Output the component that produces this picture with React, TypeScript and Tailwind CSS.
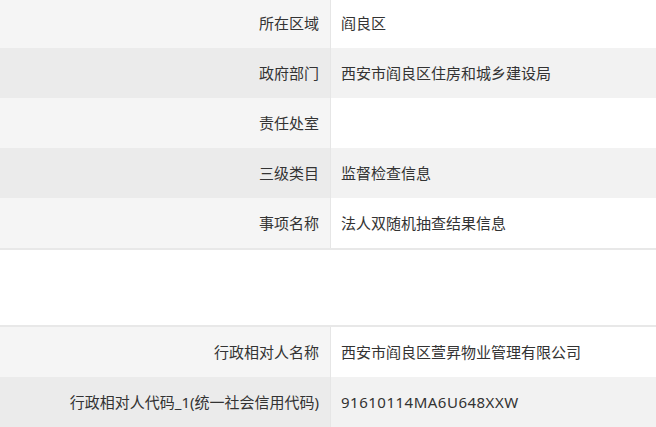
const infoRows = [
  { label: '所在区域', value: '阎良区' },
  { label: '政府部门', value: '西安市阎良区住房和城乡建设局' },
  { label: '责任处室', value: '' },
  { label: '三级类目', value: '监督检查信息' },
  { label: '事项名称', value: '法人双随机抽查结果信息' },
];

const partyRows = [
  { label: '行政相对人名称', value: '西安市阎良区萱昇物业管理有限公司' },
  { label: '行政相对人代码_1(统一社会信用代码)', value: '91610114MA6U648XXW', code: true },
];

type Row = { label: string; value: string; code?: boolean };

const InfoTable = ({ rows, className = '' }: { rows: Row[]; className?: string }) => (
  <div className={`flex flex-col ${className}`}>
    {rows.map((row, i) => {
      const even = i % 2 === 1;
      return (
        <div key={row.label} className="flex h-[50px]">
          <div
            className={`w-[331px] shrink-0 flex items-center justify-end pr-[11px] border-r border-[#e6e6e6] ${
              even ? 'bg-[#ebebeb]' : 'bg-[#f5f5f5]'
            }`}
          >
            {row.label}
          </div>
          <div
            className={`flex-1 flex items-center pl-[10px] ${even ? 'bg-[#f2f2f2]' : 'bg-white'} ${
              row.code ? 'tracking-[0.5px]' : ''
            }`}
          >
            {row.value}
          </div>
        </div>
      );
    })}
  </div>
);

export default function App() {
  return (
    <div
      className="w-[656px] h-[427px] overflow-hidden bg-white text-[15px] text-[#333]"
      style={{ fontFamily: '"Noto Sans", "Noto Sans CJK SC", sans-serif' }}
    >
      <InfoTable rows={infoRows} className="-mt-[2px] border-b-2 border-[#e8e8e8]" />
      <div className="h-[75px]" />
      <InfoTable rows={partyRows} className="border-t-2 border-[#e8e8e8]" />
    </div>
  );
}
